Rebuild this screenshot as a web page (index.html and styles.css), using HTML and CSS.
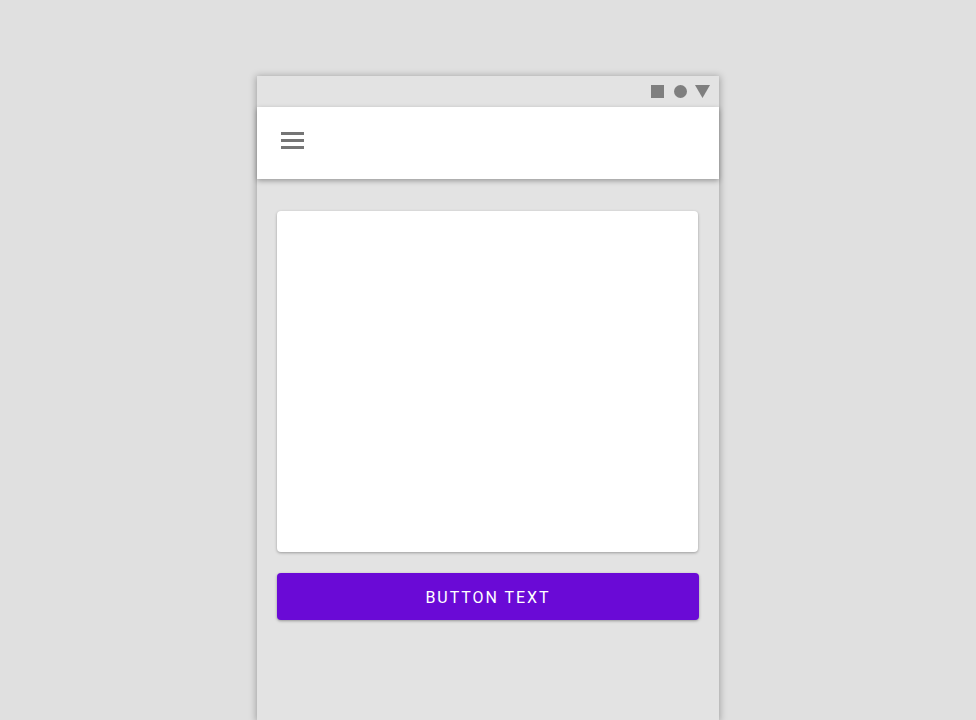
FILE: index.html
```html
<!DOCTYPE html>
<html lang="en">
<head>
  <meta charset="UTF-8" />
  <meta name="viewport" content="width=device-width, initial-scale=1.0"/>
  <title>Button Layout</title>
  <link rel="stylesheet" href="styles.css">
</head>
<body>
  <div class="phone">
    <div class="status-bar">
      <svg class="status-icons" width="59" height="14" viewBox="0 0 59 14">
        <rect x="0" y="1" width="13" height="13" fill="#7f7f7f"/>
        <circle cx="29.5" cy="7.5" r="6.5" fill="#7f7f7f"/>
        <polygon points="44,1 59,1 51.5,14" fill="#7f7f7f"/>
      </svg>
    </div>
    <header class="app-bar">
      <div class="menu-icon">
        <span></span>
        <span></span>
        <span></span>
      </div>
    </header>
    <main class="content">
      <div class="card"></div>
      <button class="action-btn">BUTTON TEXT</button>
    </main>
  </div>
</body>
</html>
```

FILE: styles.css
```css
* {
  box-sizing: border-box;
}

html, body {
  height: 720px;
}

body {
  margin: 0;
  background: #e0e0e0;
  overflow: hidden;
  font-family: Roboto, sans-serif;
}

.phone {
  width: 462px;
  height: 644px;
  margin: 76px auto 0;
  background: #e3e3e3;
  box-shadow: 0 1px 7px 1px rgba(0, 0, 0, 0.28);
}

.status-bar {
  height: 31px;
  display: flex;
  justify-content: flex-end;
  align-items: flex-start;
  padding: 8px 9px 0 0;
}

.app-bar {
  position: relative;
  height: 72px;
  background: #fff;
  display: flex;
  align-items: center;
  padding: 0 0 5px 24px;
  box-shadow: 0 2px 5px rgba(0, 0, 0, 0.32);
}

.menu-icon {
  width: 23px;
  display: flex;
  flex-direction: column;
  gap: 4px;
}

.menu-icon span {
  height: 3px;
  background: #757575;
}

.content {
  display: flex;
  flex-direction: column;
  align-items: flex-start;
  padding: 32px 20px 0;
}

.card {
  width: 421px;
  height: 341px;
  background: #fff;
  border-radius: 4px;
  box-shadow: 0 1px 3px rgba(0, 0, 0, 0.32);
}

.action-btn {
  width: 422px;
  height: 47px;
  margin-top: 21px;
  padding: 2px 0 0;
  border: none;
  border-radius: 4px;
  background: #6a0ad6;
  color: #fff;
  font-family: Roboto, sans-serif;
  font-size: 16px;
  font-weight: 400;
  letter-spacing: 1.95px;
  box-shadow: 0 1px 3px rgba(0, 0, 0, 0.35);
}
```
